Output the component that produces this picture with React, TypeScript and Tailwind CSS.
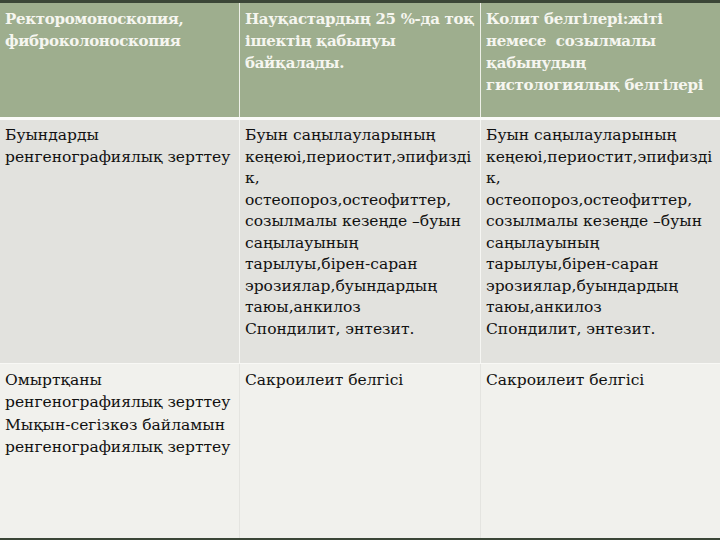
const font = { fontFamily: '"DejaVu Serif", "Liberation Serif", serif' };

type Cell = string[];

function Lines({ lines }: { lines: Cell }) {
  return (
    <>
      {lines.map((l, i) => (
        <div key={i} className="whitespace-pre">
          {l}
        </div>
      ))}
    </>
  );
}

const header: Cell[] = [
  ["Ректоромоноскопия,", "фиброколоноскопия"],
  ["Науқастардың 25 %-да тоқ", "ішектің қабынуы", "байқалады."],
  ["Колит белгілері:жіті", "немесе  созылмалы", "қабынудың", "гистологиялық белгілері"],
];

const joints: Cell = [
  "Буын саңылауларының",
  "кеңеюі,периостит,эпифизді",
  "к,",
  "остеопороз,остеофиттер,",
  "созылмалы кезеңде –буын",
  "саңылауының",
  "тарылуы,бірен-саран",
  "эрозиялар,буындардың",
  "таюы,анкилоз",
  "Спондилит, энтезит.",
];

const row2: Cell[] = [["Буындарды", "ренгенографиялық зерттеу"], joints, joints];

const row3: Cell[] = [
  ["Омыртқаны", "ренгенографиялық зерттеу", "Мықын-сегізкөз байламын", "ренгенографиялық зерттеу"],
  ["Сакроилеит белгісі"],
  ["Сакроилеит белгісі"],
];

export default function App() {
  return (
    <div className="flex h-[540px] w-[720px] flex-col overflow-hidden bg-[#f1f1ed]" style={font}>
      <div className="h-[3px] bg-[#3b4637]" />
      {/* header */}
      <div className="grid h-[114px] grid-cols-[239px_241px_240px] bg-[#9eae8e] text-[15px] font-bold leading-[22px] tracking-[-0.3px] text-[#f6f6f0]">
        {header.map((c, i) => (
          <div key={i} className={`overflow-hidden px-[5px] pt-[5px] ${i > 0 ? "border-l border-[#eef0e8]" : ""}`}>
            <Lines lines={c} />
          </div>
        ))}
      </div>
      <div className="h-[3px] bg-[#fafaf8]" />
      {/* joints row */}
      <div className="grid h-[243px] grid-cols-[239px_241px_240px] bg-[#e2e2de] text-[15.5px] leading-[21.5px] text-[#111]">
        {row2.map((c, i) => (
          <div key={i} className={`px-[5px] pt-[5px] ${i > 0 ? "border-l border-[#f6f6f3]" : ""}`}>
            <Lines lines={c} />
          </div>
        ))}
      </div>
      {/* spine row */}
      <div className="grid h-[175px] grid-cols-[239px_241px_240px] border-t border-[#f8f8f5] bg-[#f1f1ed] text-[15.5px] leading-[22.3px] text-[#111]">
        {row3.map((c, i) => (
          <div key={i} className={`px-[5px] pt-[5px] ${i > 0 ? "border-l border-[#e4e4e0]" : ""}`}>
            <Lines lines={c} />
          </div>
        ))}
      </div>
      <div className="h-[2px] bg-[#3b4637]" />
    </div>
  );
}
